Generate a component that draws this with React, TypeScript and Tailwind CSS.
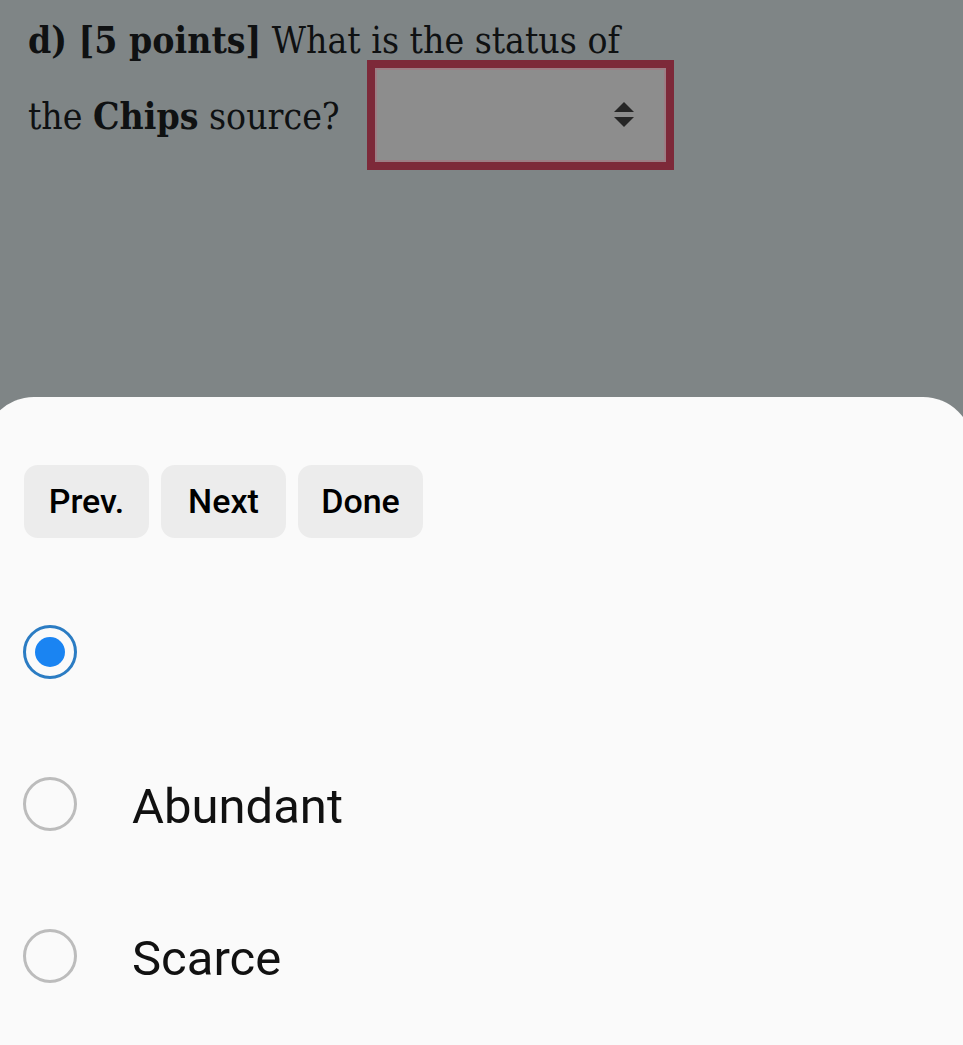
import React from "react";

const serif = { fontFamily: '"DejaVu Serif Condensed", "DejaVu Serif", serif' };

function Radio({ checked }: { checked?: boolean }) {
  if (checked) {
    return (
      <div className="w-[54px] h-[54px] rounded-full border-[3px] border-[#2b7cc3] flex items-center justify-center shrink-0">
        <div className="w-[30px] h-[30px] rounded-full bg-[#1a84f2]" />
      </div>
    );
  }
  return <div className="w-[54px] h-[54px] rounded-full border-[3px] border-[#bcbcbc] shrink-0" />;
}

export default function App() {
  const btn =
    "w-[125px] h-[73px] rounded-[14px] bg-[#ececec] flex items-center justify-center text-[34px] font-medium text-black";
  return (
    <div
      className="w-[963px] h-[1045px] overflow-hidden bg-[#7f8586] flex flex-col"
      style={{ fontFamily: 'Roboto, "Noto Sans", sans-serif' }}
    >
      <div className="h-[397px] shrink-0 pl-[28px] pt-[21px] text-[#0f1112]" style={serif}>
        <div className="text-[37px] leading-[38px] whitespace-nowrap">
          <b className="font-bold">d) [5 points]</b> What is the status of
        </div>
        <div className="flex items-center">
          <span className="text-[37px] leading-[40px] pt-[3px] whitespace-nowrap">
            the <b className="font-bold">Chips</b> source?
          </span>
          <div className="ml-[27px] w-[307px] h-[110px] border-[8px] border-[#7d2939] bg-[#8d8d8d] shadow-[inset_0_0_0_2px_#9c7e85] flex items-center justify-end pr-[32px]">
            <svg width="20" height="26" viewBox="0 0 20 26">
              <path d="M10 0 L20 10 L0 10 Z" fill="#262626" />
              <path d="M0 15 L20 15 L10 25 Z" fill="#262626" />
            </svg>
          </div>
        </div>
      </div>
      <div className="ml-[-16px] w-[989px] flex-1 bg-[#fafafa] rounded-t-[50px] pl-[40px] pt-[68px]">
        <div className="flex gap-[12px]">
          <div className={btn}>Prev.</div>
          <div className={btn}>Next</div>
          <div className={btn}>Done</div>
        </div>
        <div className="mt-[38px] flex flex-col">
          <div className="h-[152px] flex items-center">
            <div className="-ml-[1px]"><Radio checked /></div>
          </div>
          <div className="h-[152px] flex items-center">
            <div className="-ml-[1px]"><Radio /></div>
            <span className="ml-[55px] text-[49px] text-[#111] leading-none pt-[4px]">Abundant</span>
          </div>
          <div className="h-[152px] flex items-center">
            <div className="-ml-[1px]"><Radio /></div>
            <span className="ml-[55px] text-[49px] text-[#111] leading-none pt-[4px]">Scarce</span>
          </div>
        </div>
      </div>
    </div>
  );
}
